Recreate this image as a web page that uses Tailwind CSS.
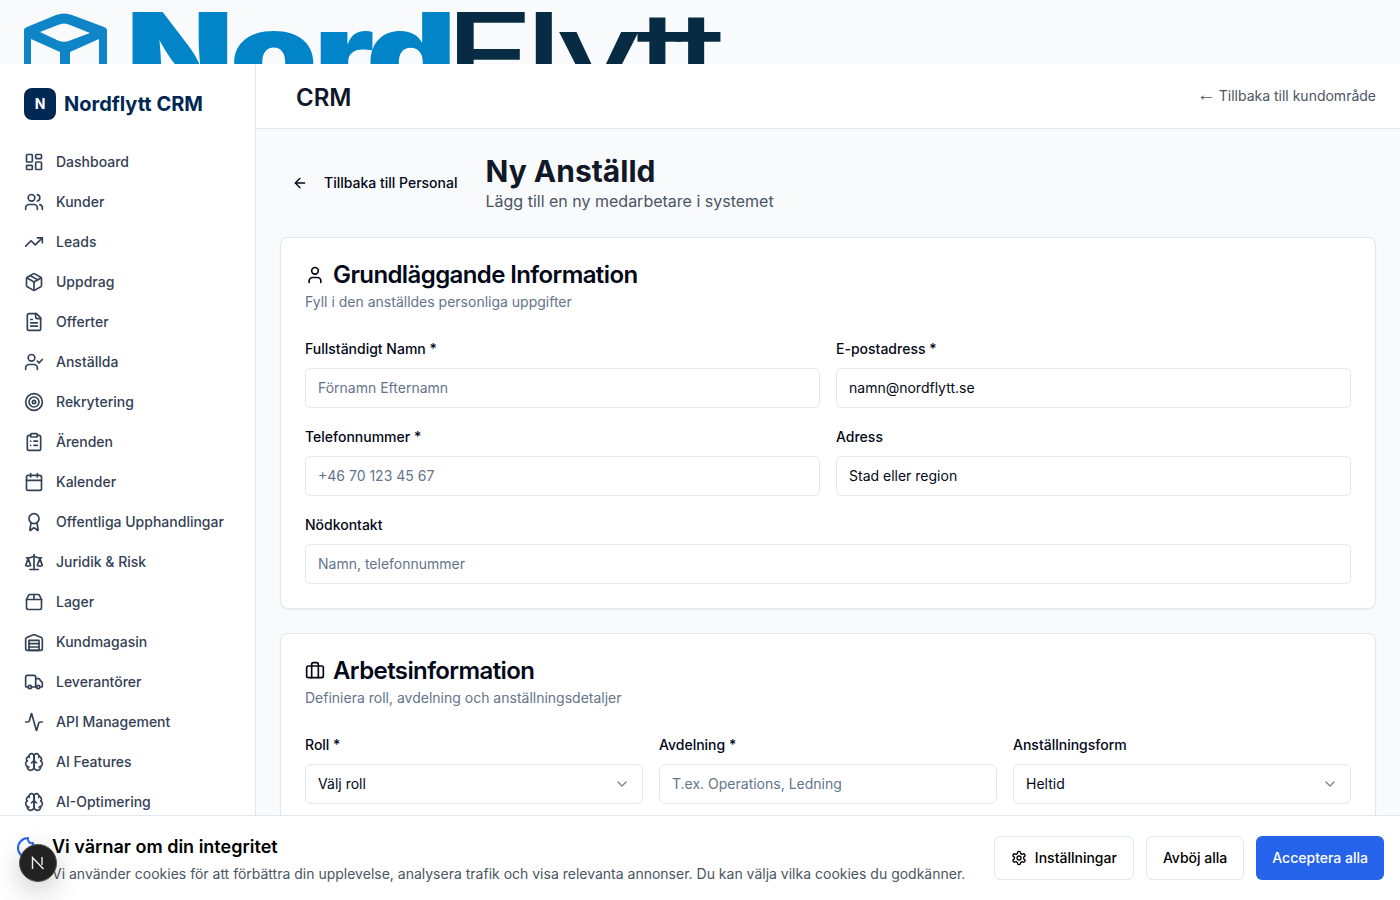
<!DOCTYPE html>
<html lang="sv">

<head>
    <meta charset="UTF-8">
    <meta name="viewport" content="width=device-width, initial-scale=1.0">
    <title>Ny Anställd - Nordflytt CRM</title>
    <script src="https://cdn.jsdelivr.net/npm/@tailwindcss/browser@4"></script>
</head>

<body class="relative h-screen overflow-hidden bg-[#f8fafc] font-['Inter',sans-serif] text-[#020817]">
    <!-- top logo, image is taller than its box -->
    <div class="flex h-16 items-start overflow-hidden bg-[#f8fafc] pl-6">
        <svg class="mt-[13px] h-[51px] w-[83px] shrink-0 text-[#0d85c7]" viewBox="0 0 83 51" fill="currentColor" fill-rule="evenodd">
            <path d="M0 51V17Q0 15 3 14L32 2Q40-1 48 2L80 14Q83 15 83 17V51H75V26L46 39V51H36V39L7 26V51ZM16 19 34 12Q40 9 46 12L66 20 46 27.5Q40 30 34 27.5Z" />
        </svg>
        <div class="ml-[19px] flex h-16 shrink-0 items-start">
            <span class="mt-[-13px] w-[319px] shrink-0 origin-left scale-x-[1.25] text-[112px] leading-[130px] font-black tracking-[-3px] text-[#0284c9]">Nord</span>
            <span class="mt-[-13px] w-[265px] shrink-0 origin-left scale-x-[1.335] text-[112px] leading-[130px] font-medium tracking-[-6px] text-[#072b42]">Flytt</span>
        </div>
    </div>

    <div class="flex h-[836px]">
        <aside class="w-64 shrink-0 overflow-hidden border-r border-[#e2e8f0] bg-white">
            <div class="flex h-14 items-end gap-2 px-6">
                <div class="flex size-8 items-center justify-center rounded-lg bg-[#002855] text-sm font-bold text-white">N</div>
                <span class="pb-[2px] text-xl font-bold text-[#002855]">Nordflytt CRM</span>
            </div>
            <nav class="mt-[22px] flex flex-col text-sm font-medium text-[#334155]">
                <a class="flex h-10 items-center gap-3 px-6"><svg class="size-5" viewBox="0 0 24 24" fill="none" stroke="currentColor" stroke-width="2" stroke-linecap="round" stroke-linejoin="round"><rect x="3" y="3" width="7" height="9" rx="1" /><rect x="14" y="3" width="7" height="5" rx="1" /><rect x="14" y="12" width="7" height="9" rx="1" /><rect x="3" y="16" width="7" height="5" rx="1" /></svg>Dashboard</a>
                <a class="flex h-10 items-center gap-3 px-6"><svg class="size-5" viewBox="0 0 24 24" fill="none" stroke="currentColor" stroke-width="2" stroke-linecap="round" stroke-linejoin="round"><path d="M16 21v-2a4 4 0 0 0-4-4H6a4 4 0 0 0-4 4v2" /><circle cx="9" cy="7" r="4" /><path d="M22 21v-2a4 4 0 0 0-3-3.87" /><path d="M16 3.13a4 4 0 0 1 0 7.75" /></svg>Kunder</a>
                <a class="flex h-10 items-center gap-3 px-6"><svg class="size-5" viewBox="0 0 24 24" fill="none" stroke="currentColor" stroke-width="2" stroke-linecap="round" stroke-linejoin="round"><polyline points="22 7 13.5 15.5 8.5 10.5 2 17" /><polyline points="16 7 22 7 22 13" /></svg>Leads</a>
                <a class="flex h-10 items-center gap-3 px-6"><svg class="size-5" viewBox="0 0 24 24" fill="none" stroke="currentColor" stroke-width="2" stroke-linecap="round" stroke-linejoin="round"><path d="M11 21.73a2 2 0 0 0 2 0l7-4A2 2 0 0 0 21 16V8a2 2 0 0 0-1-1.73l-7-4a2 2 0 0 0-2 0l-7 4A2 2 0 0 0 3 8v8a2 2 0 0 0 1 1.73z" /><path d="M12 22V12" /><path d="M3.29 7 12 12l8.71-5" /><path d="m7.5 4.27 9 5.15" /></svg>Uppdrag</a>
                <a class="flex h-10 items-center gap-3 px-6"><svg class="size-5" viewBox="0 0 24 24" fill="none" stroke="currentColor" stroke-width="2" stroke-linecap="round" stroke-linejoin="round"><path d="M15 2H6a2 2 0 0 0-2 2v16a2 2 0 0 0 2 2h12a2 2 0 0 0 2-2V7Z" /><path d="M14 2v4a2 2 0 0 0 2 2h4" /><path d="M10 9H8" /><path d="M16 13H8" /><path d="M16 17H8" /></svg>Offerter</a>
                <a class="flex h-10 items-center gap-3 px-6"><svg class="size-5" viewBox="0 0 24 24" fill="none" stroke="currentColor" stroke-width="2" stroke-linecap="round" stroke-linejoin="round"><path d="M16 21v-2a4 4 0 0 0-4-4H6a4 4 0 0 0-4 4v2" /><circle cx="9" cy="7" r="4" /><polyline points="16 11 18 13 22 9" /></svg>Anställda</a>
                <a class="flex h-10 items-center gap-3 px-6"><svg class="size-5" viewBox="0 0 24 24" fill="none" stroke="currentColor" stroke-width="2" stroke-linecap="round" stroke-linejoin="round"><circle cx="12" cy="12" r="10" /><circle cx="12" cy="12" r="6" /><circle cx="12" cy="12" r="2" /></svg>Rekrytering</a>
                <a class="flex h-10 items-center gap-3 px-6"><svg class="size-5" viewBox="0 0 24 24" fill="none" stroke="currentColor" stroke-width="2" stroke-linecap="round" stroke-linejoin="round"><rect x="8" y="2" width="8" height="4" rx="1" /><path d="M16 4h2a2 2 0 0 1 2 2v14a2 2 0 0 1-2 2H6a2 2 0 0 1-2-2V6a2 2 0 0 1 2-2h2" /><path d="M12 11h4" /><path d="M12 16h4" /><path d="M8 11h.01" /><path d="M8 16h.01" /></svg>Ärenden</a>
                <a class="flex h-10 items-center gap-3 px-6"><svg class="size-5" viewBox="0 0 24 24" fill="none" stroke="currentColor" stroke-width="2" stroke-linecap="round" stroke-linejoin="round"><path d="M8 2v4" /><path d="M16 2v4" /><rect x="3" y="4" width="18" height="18" rx="2" /><path d="M3 10h18" /></svg>Kalender</a>
                <a class="flex h-10 items-center gap-3 px-6"><svg class="size-5" viewBox="0 0 24 24" fill="none" stroke="currentColor" stroke-width="2" stroke-linecap="round" stroke-linejoin="round"><path d="m15.477 12.89 1.515 8.526a.5.5 0 0 1-.81.47l-3.58-2.687a1 1 0 0 0-1.197 0l-3.586 2.686a.5.5 0 0 1-.81-.469l1.514-8.526" /><circle cx="12" cy="8" r="6" /></svg>Offentliga Upphandlingar</a>
                <a class="flex h-10 items-center gap-3 px-6"><svg class="size-5" viewBox="0 0 24 24" fill="none" stroke="currentColor" stroke-width="2" stroke-linecap="round" stroke-linejoin="round"><path d="m16 16 3-8 3 8c-.87.65-1.92 1-3 1s-2.13-.35-3-1Z" /><path d="m2 16 3-8 3 8c-.87.65-1.92 1-3 1s-2.13-.35-3-1Z" /><path d="M7 21h10" /><path d="M12 3v18" /><path d="M3 7h2c2 0 5-1 7-2 2 1 5 2 7 2h2" /></svg>Juridik &amp; Risk</a>
                <a class="flex h-10 items-center gap-3 px-6"><svg class="size-5" viewBox="0 0 24 24" fill="none" stroke="currentColor" stroke-width="2" stroke-linecap="round" stroke-linejoin="round"><path d="M3 9h18v10a2 2 0 0 1-2 2H5a2 2 0 0 1-2-2V9Z" /><path d="m3 9 2.45-4.9A2 2 0 0 1 7.24 3h9.52a2 2 0 0 1 1.8 1.1L21 9" /><path d="M12 3v6" /></svg>Lager</a>
                <a class="flex h-10 items-center gap-3 px-6"><svg class="size-5" viewBox="0 0 24 24" fill="none" stroke="currentColor" stroke-width="2" stroke-linecap="round" stroke-linejoin="round"><path d="M22 8.35V20a2 2 0 0 1-2 2H4a2 2 0 0 1-2-2V8.35A2 2 0 0 1 3.26 6.5l8-3.2a2 2 0 0 1 1.48 0l8 3.2A2 2 0 0 1 22 8.35Z" /><path d="M6 18h12" /><path d="M6 14h12" /><rect x="6" y="10" width="12" height="12" /></svg>Kundmagasin</a>
                <a class="flex h-10 items-center gap-3 px-6"><svg class="size-5" viewBox="0 0 24 24" fill="none" stroke="currentColor" stroke-width="2" stroke-linecap="round" stroke-linejoin="round"><path d="M14 18V6a2 2 0 0 0-2-2H4a2 2 0 0 0-2 2v11a1 1 0 0 0 1 1h2" /><path d="M15 18H9" /><path d="M19 18h2a1 1 0 0 0 1-1v-3.65a1 1 0 0 0-.22-.624l-3.48-4.35A1 1 0 0 0 17.52 8H14" /><circle cx="17" cy="18" r="2" /><circle cx="7" cy="18" r="2" /></svg>Leverantörer</a>
                <a class="flex h-10 items-center gap-3 px-6"><svg class="size-5" viewBox="0 0 24 24" fill="none" stroke="currentColor" stroke-width="2" stroke-linecap="round" stroke-linejoin="round"><path d="M22 12h-2.48a2 2 0 0 0-1.93 1.46l-2.35 8.36a.25.25 0 0 1-.48 0L9.24 2.18a.25.25 0 0 0-.48 0l-2.35 8.36A2 2 0 0 1 4.49 12H2" /></svg>API Management</a>
                <a class="flex h-10 items-center gap-3 px-6"><svg class="size-5" viewBox="0 0 24 24" fill="none" stroke="currentColor" stroke-width="2" stroke-linecap="round" stroke-linejoin="round"><path d="M12 5a3 3 0 1 0-5.997.125 4 4 0 0 0-2.526 5.77 4 4 0 0 0 .556 6.588A4 4 0 1 0 12 18Z" /><path d="M12 5a3 3 0 1 1 5.997.125 4 4 0 0 1 2.526 5.77 4 4 0 0 1-.556 6.588A4 4 0 1 1 12 18Z" /><path d="M15 13a4.5 4.5 0 0 1-3-4 4.5 4.5 0 0 1-3 4" /><path d="M17.599 6.5a3 3 0 0 0 .399-1.375" /><path d="M6.003 5.125A3 3 0 0 0 6.401 6.5" /><path d="M3.477 10.896a4 4 0 0 1 .585-.396" /><path d="M19.938 10.5a4 4 0 0 1 .585.396" /><path d="M6 18a4 4 0 0 1-1.967-.516" /><path d="M19.967 17.484A4 4 0 0 1 18 18" /></svg>AI Features</a>
                <a class="flex h-10 items-center gap-3 px-6"><svg class="size-5" viewBox="0 0 24 24" fill="none" stroke="currentColor" stroke-width="2" stroke-linecap="round" stroke-linejoin="round"><path d="M12 5a3 3 0 1 0-5.997.125 4 4 0 0 0-2.526 5.77 4 4 0 0 0 .556 6.588A4 4 0 1 0 12 18Z" /><path d="M12 5a3 3 0 1 1 5.997.125 4 4 0 0 1 2.526 5.77 4 4 0 0 1-.556 6.588A4 4 0 1 1 12 18Z" /><path d="M15 13a4.5 4.5 0 0 1-3-4 4.5 4.5 0 0 1-3 4" /><path d="M17.599 6.5a3 3 0 0 0 .399-1.375" /><path d="M6.003 5.125A3 3 0 0 0 6.401 6.5" /><path d="M3.477 10.896a4 4 0 0 1 .585-.396" /><path d="M19.938 10.5a4 4 0 0 1 .585.396" /><path d="M6 18a4 4 0 0 1-1.967-.516" /><path d="M19.967 17.484A4 4 0 0 1 18 18" /></svg>AI-Optimering</a>
            </nav>
        </aside>

        <div class="min-w-0 flex-1">
            <header class="flex h-[65px] items-center justify-between border-b border-[#e2e8f0] bg-white pr-6 pl-10">
                <h2 class="mt-1 text-2xl font-semibold text-[#111827]">CRM</h2>
                <a class="-mt-0.5 text-sm text-[#4b5563]"><span class="mr-[-1px] font-['Liberation_Sans',sans-serif] text-[19px] leading-none">←</span> Tillbaka till kundområde</a>
            </header>

            <main class="px-6 pt-6">
                <div class="flex items-start gap-4">
                    <button class="mt-[10px] flex h-10 items-center gap-2 px-3 text-sm font-medium">
                        <svg class="mr-2 size-4" viewBox="0 0 24 24" fill="none" stroke="currentColor" stroke-width="2" stroke-linecap="round" stroke-linejoin="round"><path d="m12 19-7-7 7-7" /><path d="M19 12H5" /></svg>
                        Tillbaka till Personal
                    </button>
                    <div>
                        <h1 class="text-3xl leading-9 font-bold text-[#111827]">Ny Anställd</h1>
                        <p class="text-base text-[#4b5563]">Lägg till en ny medarbetare i systemet</p>
                    </div>
                </div>

                <section class="mt-6 rounded-lg border border-[#e2e8f0] bg-white p-6 shadow-xs">
                    <h3 class="flex items-center gap-2 text-2xl leading-[26px] font-semibold tracking-tight">
                        <svg class="size-5" viewBox="0 0 24 24" fill="none" stroke="currentColor" stroke-width="2" stroke-linecap="round" stroke-linejoin="round"><path d="M19 21v-2a4 4 0 0 0-4-4H9a4 4 0 0 0-4 4v2" /><circle cx="12" cy="7" r="4" /></svg>
                        Grundläggande Information
                    </h3>
                    <p class="mt-1 text-sm text-[#64748b]">Fyll i den anställdes personliga uppgifter</p>

                    <div class="mt-[26px] grid grid-cols-2 gap-x-4 gap-y-[18px]">
                        <div>
                            <label class="block text-sm leading-[22px] font-medium">Fullständigt Namn *</label>
                            <input class="mt-2 h-10 w-full rounded-md border border-[#e2e8f0] bg-white px-3 pb-0.5 text-sm placeholder:text-[#64748b]" placeholder="Förnamn Efternamn">
                        </div>
                        <div>
                            <label class="block text-sm leading-[22px] font-medium">E-postadress *</label>
                            <input class="mt-2 h-10 w-full rounded-md border border-[#e2e8f0] bg-white px-3 pb-0.5 text-sm" value="namn@nordflytt.se">
                        </div>
                        <div>
                            <label class="block text-sm leading-[22px] font-medium">Telefonnummer *</label>
                            <input class="mt-2 h-10 w-full rounded-md border border-[#e2e8f0] bg-white px-3 pb-0.5 text-sm placeholder:text-[#64748b]" placeholder="+46 70 123 45 67">
                        </div>
                        <div>
                            <label class="block text-sm leading-[22px] font-medium">Adress</label>
                            <input class="mt-2 h-10 w-full rounded-md border border-[#e2e8f0] bg-white px-3 pb-0.5 text-sm" value="Stad eller region">
                        </div>
                        <div class="col-span-2">
                            <label class="block text-sm leading-[22px] font-medium">Nödkontakt</label>
                            <input class="mt-2 h-10 w-full rounded-md border border-[#e2e8f0] bg-white px-3 pb-0.5 text-sm placeholder:text-[#64748b]" placeholder="Namn, telefonnummer">
                        </div>
                    </div>
                </section>

                <section class="mt-6 rounded-lg border border-[#e2e8f0] bg-white p-6 shadow-xs">
                    <h3 class="flex items-center gap-2 text-2xl leading-[26px] font-semibold tracking-tight">
                        <svg class="size-5" viewBox="0 0 24 24" fill="none" stroke="currentColor" stroke-width="2" stroke-linecap="round" stroke-linejoin="round"><path d="M16 20V4a2 2 0 0 0-2-2h-4a2 2 0 0 0-2 2v16" /><rect x="2" y="6" width="20" height="14" rx="2" /></svg>
                        Arbetsinformation
                    </h3>
                    <p class="mt-1 text-sm text-[#64748b]">Definiera roll, avdelning och anställningsdetaljer</p>

                    <div class="mt-[26px] grid grid-cols-3 gap-x-4">
                        <div>
                            <label class="block text-sm leading-[22px] font-medium">Roll *</label>
                            <div class="mt-2 flex h-10 items-center justify-between rounded-md border border-[#e2e8f0] bg-white px-3 text-sm">
                                Välj roll
                                <svg class="size-4 opacity-50" viewBox="0 0 24 24" fill="none" stroke="currentColor" stroke-width="2" stroke-linecap="round" stroke-linejoin="round"><path d="m6 9 6 6 6-6" /></svg>
                            </div>
                        </div>
                        <div>
                            <label class="block text-sm leading-[22px] font-medium">Avdelning *</label>
                            <input class="mt-2 h-10 w-full rounded-md border border-[#e2e8f0] bg-white px-3 pb-0.5 text-sm placeholder:text-[#64748b]" placeholder="T.ex. Operations, Ledning">
                        </div>
                        <div>
                            <label class="block text-sm leading-[22px] font-medium">Anställningsform</label>
                            <div class="mt-2 flex h-10 items-center justify-between rounded-md border border-[#e2e8f0] bg-white px-3 text-sm">
                                Heltid
                                <svg class="size-4 opacity-50" viewBox="0 0 24 24" fill="none" stroke="currentColor" stroke-width="2" stroke-linecap="round" stroke-linejoin="round"><path d="m6 9 6 6 6-6" /></svg>
                            </div>
                        </div>
                    </div>
                </section>
            </main>
        </div>
    </div>

    <!-- cookie banner -->
    <div class="absolute inset-x-0 bottom-0 flex h-[85px] items-center justify-between border-t border-[#e2e8f0] bg-white pr-4 pl-[17px]">
        <div class="flex items-start gap-3">
            <svg class="mt-1 -ml-px size-6 shrink-0 text-[#2563eb]" viewBox="0 0 24 24" fill="none" stroke="currentColor" stroke-width="2" stroke-linecap="round" stroke-linejoin="round"><path d="M12 2a10 10 0 1 0 10 10 4 4 0 0 1-5-5 4 4 0 0 1-5-5" /></svg>
            <div>
                <h4 class="mt-px text-lg leading-7 font-semibold text-black">Vi värnar om din integritet</h4>
                <p class="mt-[3px] text-sm text-[#4b5563]">Vi använder cookies för att förbättra din upplevelse, analysera trafik och visa relevanta annonser. Du kan välja vilka cookies du godkänner.</p>
            </div>
        </div>
        <div class="flex items-center gap-3 text-sm font-medium">
            <button class="flex h-11 items-center gap-2 rounded-md border border-[#e2e8f0] bg-white px-4 text-black">
                <svg class="size-4" viewBox="0 0 24 24" fill="none" stroke="currentColor" stroke-width="2" stroke-linecap="round" stroke-linejoin="round"><path d="M12.22 2h-.44a2 2 0 0 0-2 2v.18a2 2 0 0 1-1 1.73l-.43.25a2 2 0 0 1-2 0l-.15-.08a2 2 0 0 0-2.73.73l-.22.38a2 2 0 0 0 .73 2.73l.15.1a2 2 0 0 1 1 1.72v.51a2 2 0 0 1-1 1.74l-.15.09a2 2 0 0 0-.73 2.73l.22.38a2 2 0 0 0 2.73.73l.15-.08a2 2 0 0 1 2 0l.43.25a2 2 0 0 1 1 1.73V20a2 2 0 0 0 2 2h.44a2 2 0 0 0 2-2v-.18a2 2 0 0 1 1-1.73l.43-.25a2 2 0 0 1 2 0l.15.08a2 2 0 0 0 2.73-.73l.22-.39a2 2 0 0 0-.73-2.73l-.15-.08a2 2 0 0 1-1-1.74v-.5a2 2 0 0 1 1-1.74l.15-.09a2 2 0 0 0 .73-2.73l-.22-.38a2 2 0 0 0-2.73-.73l-.15.08a2 2 0 0 1-2 0l-.43-.25a2 2 0 0 1-1-1.73V4a2 2 0 0 0-2-2z" /><circle cx="12" cy="12" r="3" /></svg>
                Inställningar
            </button>
            <button class="h-11 rounded-md border border-[#e2e8f0] bg-white px-4 text-black">Avböj alla</button>
            <button class="h-11 rounded-md bg-[#2563eb] px-4 text-white">Acceptera alla</button>
        </div>
    </div>

    <!-- dev indicator -->
    <div class="absolute top-[844px] left-[19px] flex size-[38px] items-center justify-center rounded-full border border-[#555] bg-[#222] shadow-[0_8px_28px_rgba(0,0,0,0.22)]">
        <svg class="size-4" viewBox="0 0 16 16" fill="none" stroke="#eee" stroke-width="1.4"><path d="M2.5 14V2.5L13.5 14" /><path d="M12 2V10" /></svg>
    </div>
</body>

</html>
